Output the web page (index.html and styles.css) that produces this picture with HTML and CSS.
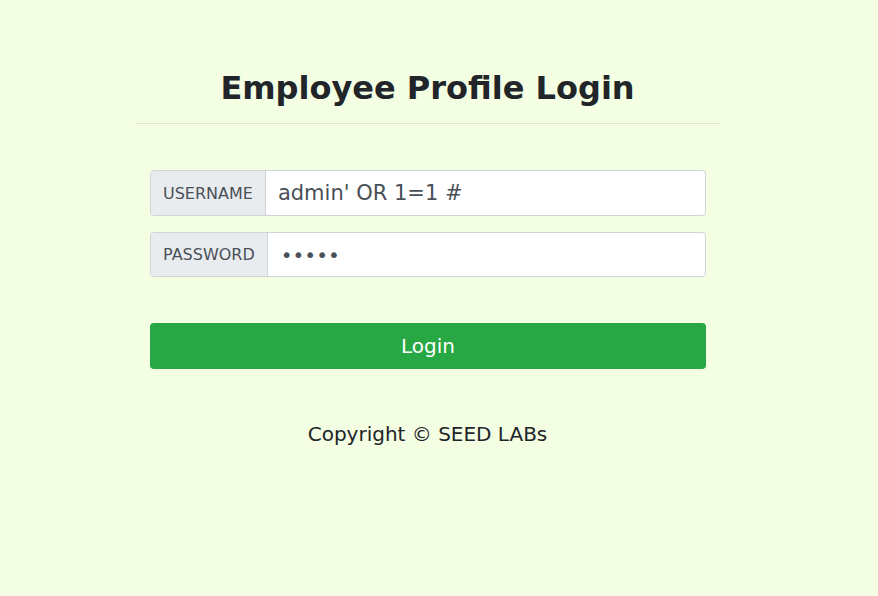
FILE: index.html
```html
<!DOCTYPE html>
<html>
<head>
<meta charset="utf-8">
<link rel="stylesheet" href="styles.css">
</head>
<body>
<div class="container">
  <h1 class="title">Employee Profile Login</h1>
  <hr class="rule">
  <form class="form">
    <div class="group username">
      <span class="addon">USERNAME</span>
      <span class="field big">admin' OR 1=1 #</span>
    </div>
    <div class="group password">
      <span class="addon">PASSWORD</span>
      <span class="field dots">&#8226;&#8226;&#8226;&#8226;&#8226;</span>
    </div>
    <button type="button" class="btn">Login</button>
  </form>
  <p class="copy">Copyright &copy; SEED LABs</p>
</div>
</body>
</html>
```
FILE: styles.css
```css
html, body {
  margin: 0;
  padding: 0;
  background: #f3fee3;
  font-family: "DejaVu Sans", sans-serif;
  color: #212529;
}
.container {
  width: 585px;
  margin-left: 135px;
  padding-top: 68px;
}
.title {
  margin: 0;
  text-align: center;
  font-size: 32px;
  font-weight: bold;
  line-height: 40px;
}
.rule {
  margin: 15px 0 0;
  border: 0;
  border-top: 1px solid #dde3d8;
}
.form {
  padding: 46px 14px 0 15px;
  display: flex;
  flex-direction: column;
}
.group {
  display: flex;
  border: 1px solid #ced4da;
  border-radius: 4px;
  overflow: hidden;
  background: #fff;
}
.username { height: 44px; }
.password { height: 43px; margin-top: 16px; }
.addon {
  display: flex;
  align-items: center;
  padding: 0 12px;
  background: #e9ecef;
  border-right: 1px solid #ced4da;
  color: #495057;
  font-size: 16px;
}
.field {
  display: flex;
  align-items: center;
  padding: 0 12px;
  color: #495057;
}
.big { font-size: 21px; }
.dots { font-size: 20px; letter-spacing: 0; padding-left: 13px; padding-top: 1px; }
.btn {
  margin-top: 46px;
  height: 46px;
  border: 0;
  border-radius: 4px;
  background: #28a745;
  color: #fff;
  font-family: "DejaVu Sans", sans-serif;
  font-size: 20px;
}
.copy {
  margin: 53px 0 0;
  text-align: center;
  font-size: 20px;
}
```
